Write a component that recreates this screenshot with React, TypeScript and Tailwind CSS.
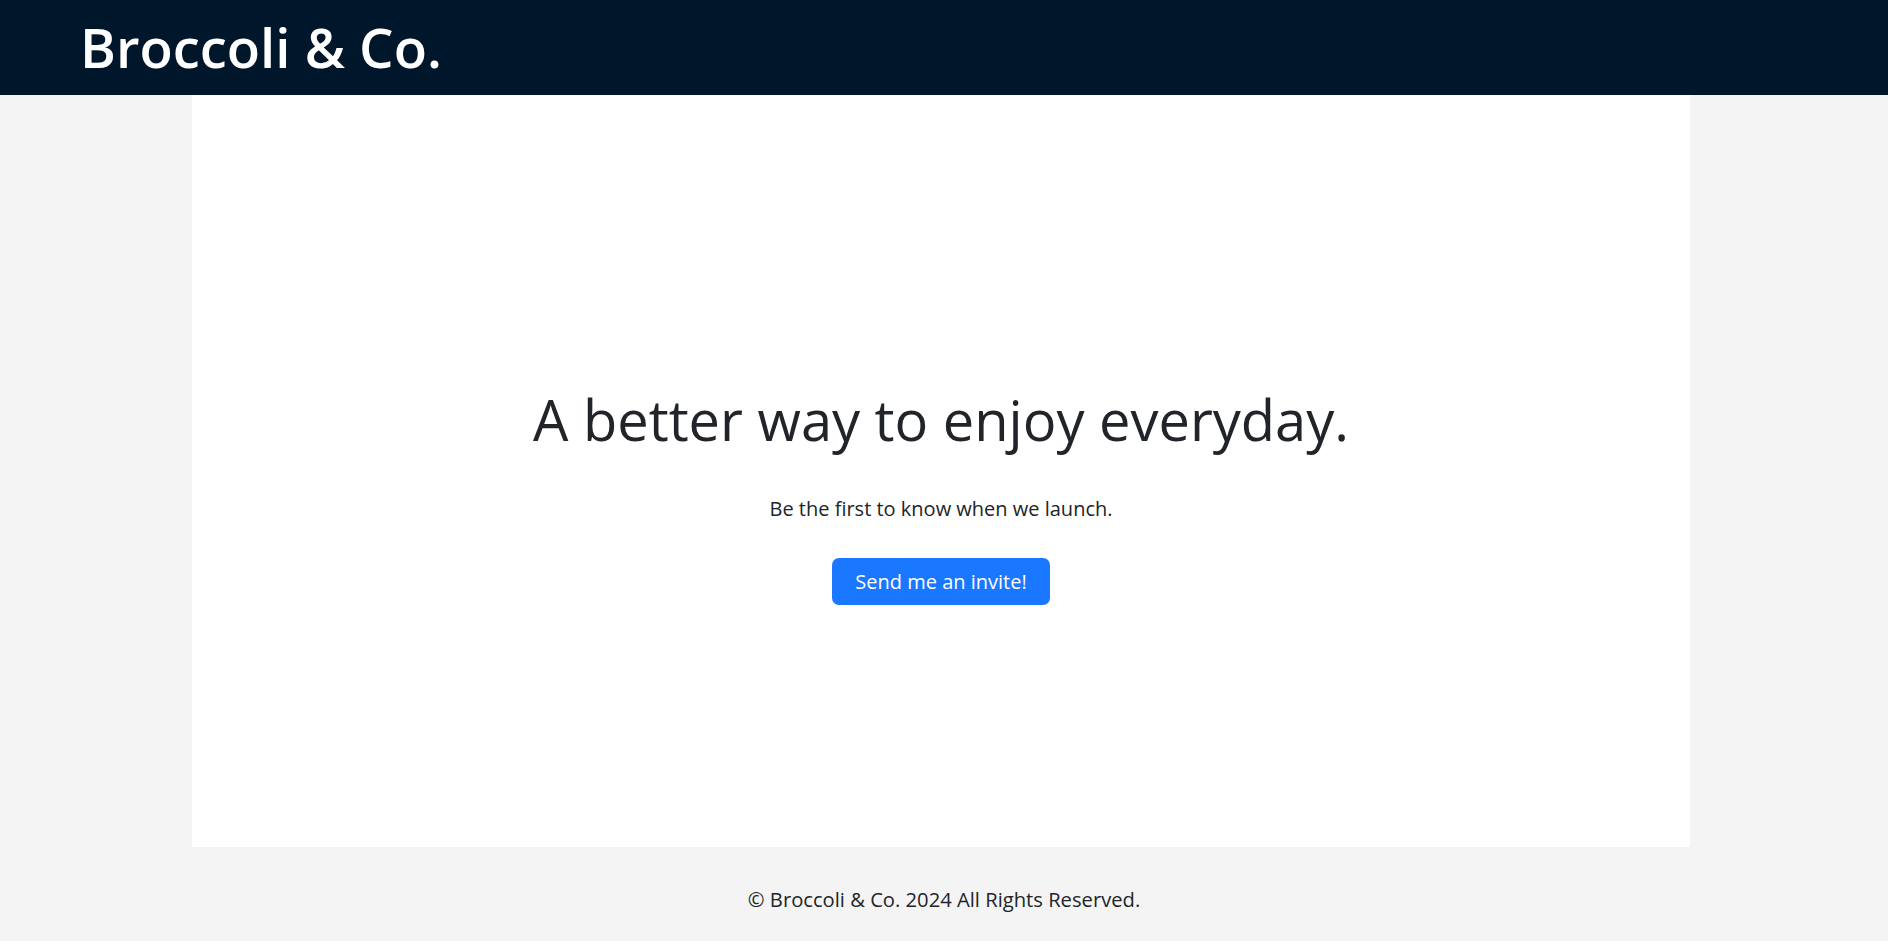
export default function App() {
  const font = { fontFamily: '"Open Sans", "Noto Sans", sans-serif' };
  return (
    <div className="flex min-h-[941px] flex-col bg-[#f4f4f4] text-[#212529]" style={font}>
      <header className="flex h-[95px] items-center bg-[#00162b] pl-[80px]">
        <h1 className="text-[54.5px] font-semibold leading-none text-white">Broccoli &amp; Co.</h1>
      </header>
      <main className="mx-auto flex h-[752px] w-[1498px] -translate-x-[3px] flex-col items-center bg-white pt-[291px]">
        <h2 className="text-[56px] leading-[1.2] text-[#212529]">A better way to enjoy everyday.</h2>
        <p className="mt-[41px] text-[20px] leading-[1.5]">Be the first to know when we launch.</p>
        <button className="mt-[34px] h-[47px] w-[218px] rounded-[7px] bg-[#1a77ff] text-[20px] text-white">
          Send me an invite!
        </button>
      </main>
      <footer className="flex flex-1 items-center justify-center pt-[10px]">
        <p className="text-[20.2px]">© Broccoli &amp; Co. 2024 All Rights Reserved.</p>
      </footer>
    </div>
  );
}
